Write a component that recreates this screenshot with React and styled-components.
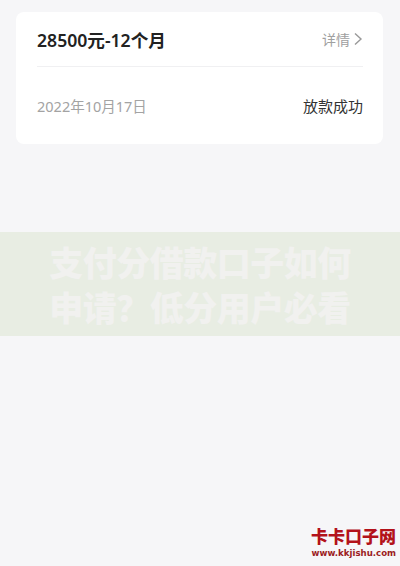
import React from 'react'
import styled, { createGlobalStyle } from 'styled-components'

const Global = createGlobalStyle`
  html, body {
    margin: 0;
    padding: 0;
    background: #f6f6f8;
    font-family: "Noto Sans", "Noto Sans CJK SC", sans-serif;
  }
`

function App() {
    return (
        <Page>
            <Global />
            <Card>
                <HeadRow>
                    <Title>28500元-12个月</Title>
                    <Detail>
                        详情
                        <svg width="10" height="14" viewBox="0 0 10 14">
                            <path d="M2 1.5 L8 7 L2 12.5" fill="none" stroke="#999" strokeWidth="1.4" />
                        </svg>
                    </Detail>
                </HeadRow>
                <Divider />
                <InfoRow>
                    <DateText>2022年10月17日</DateText>
                    <Status>放款成功</Status>
                </InfoRow>
            </Card>

            <Banner>
                <BannerText>支付分借款口子如何<br />申请？低分用户必看</BannerText>
            </Banner>

            <Watermark>
                <Brand>卡卡口子网</Brand>
                <Url>www.kkjishu.com</Url>
            </Watermark>
        </Page>
    )
}

export default App

const Page = styled.div`
    position: relative;
    width: 400px;
    height: 566px;
    overflow: hidden;
    padding-top: 12px;
    box-sizing: border-box;
`

const Card = styled.div`
    margin: 0 17px 0 16px;
    background: #fff;
    border-radius: 8px;
    padding: 0 20px 0 21px;
`

const HeadRow = styled.div`
    height: 54px;
    display: flex;
    align-items: center;
    justify-content: space-between;
`

const Title = styled.div`
    font-size: 17.6px;
    font-weight: 600;
    color: #222;
`

const Detail = styled.div`
    display: flex;
    align-items: center;
    gap: 3px;
    font-size: 14px;
    color: #a0a0a0;
`

const Divider = styled.div`
    height: 1px;
    background: #f0f0f2;
`

const InfoRow = styled.div`
    height: 77px;
    display: flex;
    align-items: center;
    justify-content: space-between;
`

const DateText = styled.div`
    font-size: 14.5px;
    color: #a3a3a3;
`

const Status = styled.div`
    font-size: 15px;
    color: #333;
`

const Banner = styled.div`
    margin-top: 88px;
    height: 104px;
    background: #e8ede3;
    display: flex;
    align-items: center;
    justify-content: center;
`

const BannerText = styled.div`
    font-family: "Noto Sans CJK SC", sans-serif;
    font-size: 34px;
    line-height: 45px;
    font-weight: 900;
    color: #f1f1ef;
    text-align: center;
    letter-spacing: -0.5px;
`

const Watermark = styled.div`
    position: absolute;
    right: 4px;
    bottom: 6px;
    display: flex;
    flex-direction: column;
    align-items: flex-end;
`

const Brand = styled.div`
    font-family: "Noto Sans CJK SC", serif;
    font-size: 17px;
    font-weight: 900;
    color: #b3121a;
    line-height: 22px;
`

const Url = styled.div`
    font-family: "DejaVu Sans", sans-serif;
    font-size: 8.6px;
    font-weight: 600;
    color: #9b1c22;
    line-height: 13px;
`
